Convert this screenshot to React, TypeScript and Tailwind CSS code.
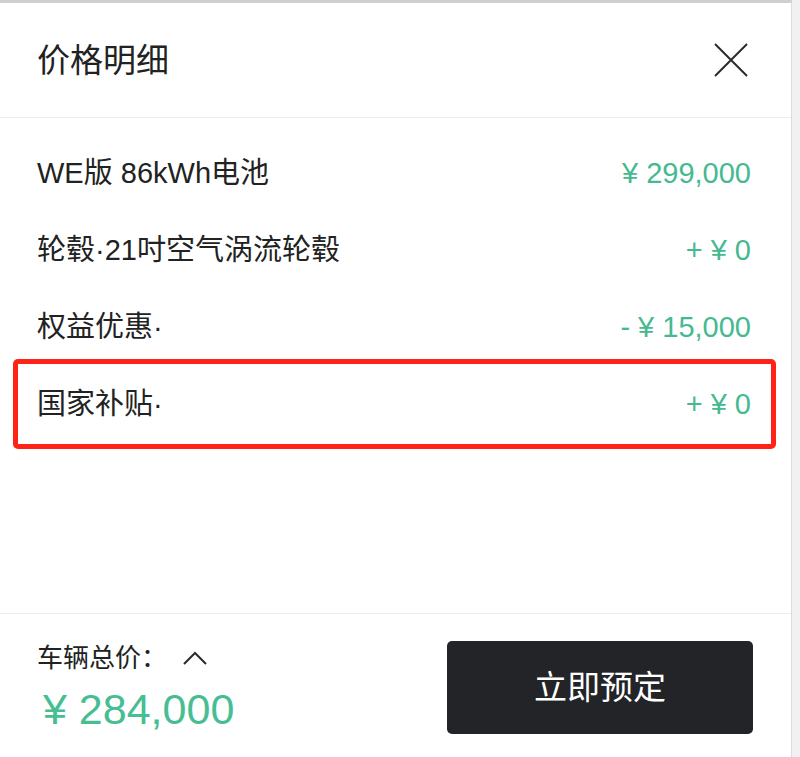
const font = { fontFamily: '"Liberation Sans", "Noto Sans CJK SC", sans-serif' };

const rows = [
  { label: "WE版 86kWh电池", value: "¥ 299,000" },
  { label: "轮毂·21吋空气涡流轮毂", value: "+ ¥ 0" },
  { label: "权益优惠·", value: "- ¥ 15,000" },
  { label: "国家补贴·", value: "+ ¥ 0", marked: true },
];

function CloseIcon() {
  return (
    <svg width="34" height="34" viewBox="0 0 34 34" fill="none" stroke="#2b2b2b" strokeWidth="2">
      <path d="M1 1 L33 33 M33 1 L1 33" />
    </svg>
  );
}

function ChevronUp() {
  return (
    <svg width="24" height="14" viewBox="0 0 24 14" fill="none" stroke="#2b2b2b" strokeWidth="2">
      <path d="M1 13 L12 2 L23 13" />
    </svg>
  );
}

export default function App() {
  return (
    <div className="w-[800px] h-[757px] flex bg-[#f1f1f1]" style={font}>
      <div className="w-[792px] h-full bg-white border-r border-[#dcdcdc] border-t-[3px] border-t-[#cfcfcf] flex flex-col">
        <header className="h-[115px] flex items-center justify-between pl-[37px] pr-[43px] border-b border-[#ececec]">
          <h1 className="text-[33px] leading-none text-[#222] font-normal">价格明细</h1>
          <CloseIcon />
        </header>

        <div className="flex-1 pt-[17px]">
          {rows.map((r) => (
            <div key={r.label} className="relative h-[77px] flex items-center justify-between pl-[37px] pr-[40px]">
              <span className="text-[29px] leading-none text-[#222]">{r.label}</span>
              <span className="text-[29px] leading-none text-[#45b98f]">{r.value}</span>
              {r.marked && (
                <span className="absolute left-[13px] right-[15px] top-[-7px] bottom-[-6px] border-[5px] border-[#ff2216] rounded-[5px]" />
              )}
            </div>
          ))}
        </div>

        <footer className="h-[144px] border-t border-[#ececec] flex items-center justify-between pl-[37px] pr-[38px] pt-[4px]">
          <div className="flex flex-col">
            <div className="flex items-center gap-[16px] text-[26px] leading-none text-[#222]">
              <span>车辆总价：</span>
              <ChevronUp />
            </div>
            <div className="mt-[17px] ml-[6px] text-[43px] leading-none text-[#47bd93]">¥ 284,000</div>
          </div>
          <button className="w-[306px] h-[93px] rounded-[5px] bg-[#222427] text-white text-[33px] leading-none">
            立即预定
          </button>
        </footer>
      </div>
    </div>
  );
}
